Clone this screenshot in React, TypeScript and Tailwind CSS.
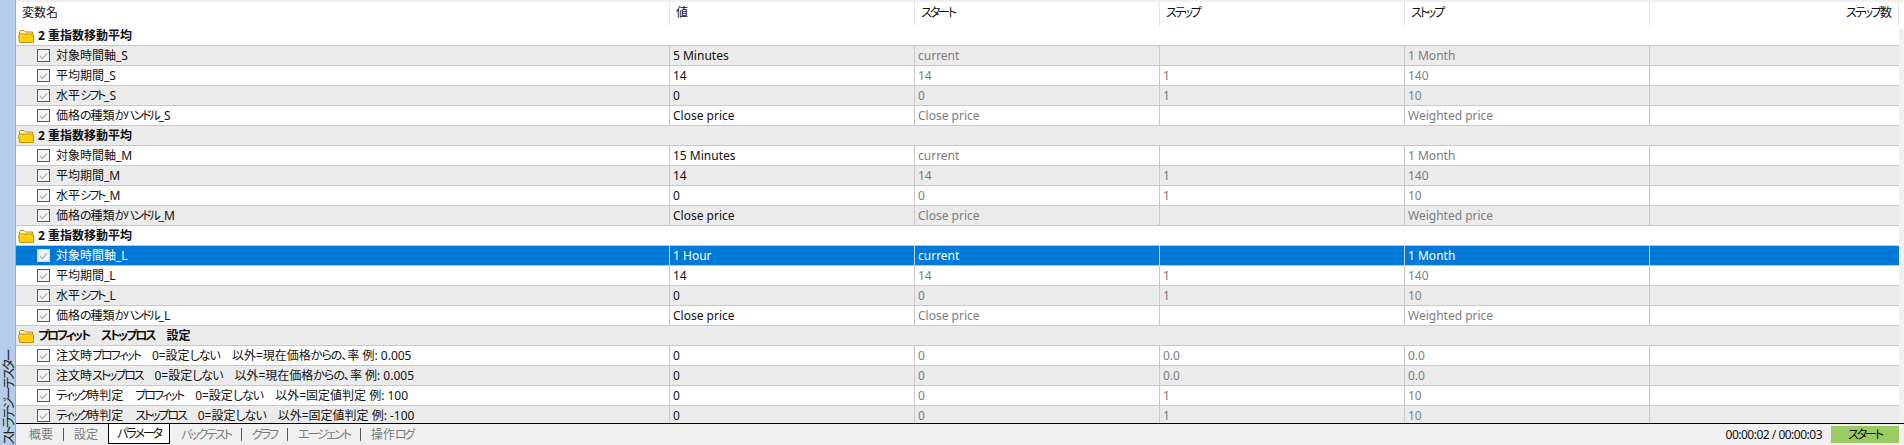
const gridCols = "grid grid-cols-[654px_245px_245px_245px_245px_1fr]";

type Row =
  | { type: "group"; name: string }
  | { type: "param"; name: string; v: string; start: string; step: string; stop: string; selected?: boolean };

const ema = (s: string, tf: string, selected = false): Row[] => [
  { type: "group", name: "2 重指数移動平均" },
  { type: "param", name: `対象時間軸_${s}`, v: tf, start: "current", step: "", stop: "1 Month", selected },
  { type: "param", name: `平均期間_${s}`, v: "14", start: "14", step: "1", stop: "140" },
  { type: "param", name: `水平シフト_${s}`, v: "0", start: "0", step: "1", stop: "10" },
  { type: "param", name: `価格の種類かハンドル_${s}`, v: "Close price", start: "Close price", step: "", stop: "Weighted price" },
];

const rows: Row[] = [
  ...ema("S", "5 Minutes"),
  ...ema("M", "15 Minutes"),
  ...ema("L", "1 Hour", true),
  { type: "group", name: "プロフィット\u3000ストップロス\u3000設定" },
  { type: "param", name: "注文時プロフィット\u30000=設定しない\u3000以外=現在価格からの、率 例: 0.005", v: "0", start: "0", step: "0.0", stop: "0.0" },
  { type: "param", name: "注文時ストップロス\u30000=設定しない\u3000以外=現在価格からの、率 例: 0.005", v: "0", start: "0", step: "0.0", stop: "0.0" },
  { type: "param", name: "ティック時判定\u3000プロフィット\u30000=設定しない\u3000以外=固定値判定 例: 100", v: "0", start: "0", step: "1", stop: "10" },
  { type: "param", name: "ティック時判定\u3000ストップロス\u30000=設定しない\u3000以外=固定値判定 例: -100", v: "0", start: "0", step: "1", stop: "10" },
];

// The reference's UI font sets kana narrower than kanji.
function K({ children }: { children: string }) {
  const parts = children.split(/([\u3040-\u30FF]+)/);
  return (
    <>
      {parts.map((p, i) => {
        if (i % 2 === 0) return <span key={i}>{p}</span>;
        const katakana = /[\u30A0-\u30FF]/.test(p);
        return (
          <span key={i} className={katakana ? "tracking-[-2.1px]" : "tracking-[-1px]"}>
            {p}
          </span>
        );
      })}
    </>
  );
}

function Folder() {
  return (
    <svg width="16" height="14" viewBox="0 0 16 14" className="shrink-0">
      <path d="M1.5 12.5V2.5L2.5 1.5H6L7.5 3H14.5V5" fill="#fff3c4" stroke="#b98a1e" />
      <path d="M0.5 6.5L2 5H14.5L15.5 6V13.5H1.5Z" fill="#ffcf0a" stroke="#c2920f" />
    </svg>
  );
}

function Check({ selected }: { selected?: boolean }) {
  return (
    <span
      className={`flex h-[13px] w-[13px] shrink-0 items-center justify-center border ${
        selected ? "border-[#c6dcf2] bg-[#eef3f8]" : "border-[#1a6aa8] bg-[#f4f4f4]"
      }`}
    >
      <svg width="9" height="8" viewBox="0 0 9 8">
        <path d="M1 4L3.5 6.5L8 1.5" fill="none" stroke="#b4b4b4" strokeWidth="1.3" />
      </svg>
    </span>
  );
}

function GridRow({ row, index }: { row: Row; index: number }) {
  const stripe = index % 2 === 1 ? "bg-[#ebebeb]" : "bg-white";
  if (row.type === "group") {
    return (
      <div className={`flex h-5 items-center gap-[4px] border-b border-[#c8c8c8] pl-[2px] font-bold text-[#111] ${stripe}`}>
        <Folder />
        <span className="whitespace-pre">
          <K>{row.name}</K>
        </span>
      </div>
    );
  }
  const sel = row.selected;
  const lines = sel ? "border-[#c4d9ef]" : "border-[#c8c8c8]";
  const cell = `truncate border-r pl-[3px] leading-[19px] ${lines}`;
  const muted = sel ? "text-white" : "text-[#7d7d7d]";
  return (
    <div className={`${gridCols} h-5 border-b border-[#c8c8c8] ${sel ? "bg-[#0078d7] text-white" : `${stripe} text-[#111]`}`}>
      <div className={`flex items-center gap-[6px] border-r pl-[21px] ${lines}`}>
        <Check selected={sel} />
        <span className="whitespace-pre">
          <K>{row.name}</K>
        </span>
      </div>
      <div className={cell}>{row.v}</div>
      <div className={`${cell} ${muted}`}>{row.start}</div>
      <div className={`${cell} ${muted}`}>{row.step}</div>
      <div className={`${cell} ${muted}`}>{row.stop}</div>
      <div />
    </div>
  );
}

const headers = ["変数名", "値", "スタート", "ステップ", "ストップ"];

function Sep() {
  return <span className="mx-[10px] h-[13px] w-px bg-[#555]" />;
}

export default function App() {
  return (
    <div className="flex h-[445px] w-[1904px] overflow-hidden bg-[#f0f0f0] font-['Noto_Sans','Noto_Sans_CJK_JP',sans-serif] text-[12px] [font-feature-settings:'palt'] text-[#111]">
      <aside className="flex w-[16px] shrink-0 items-end justify-center overflow-hidden border-r border-r-[#a6a6a6] bg-[#b5cde8]">
        <span className="rotate-180 whitespace-pre text-[13px] leading-[14px] tracking-[-2.4px] text-[#222] [text-orientation:sideways] [writing-mode:vertical-rl]">
          ストラテジーテスター
        </span>
      </aside>
      <main className="flex min-w-0 flex-1 flex-col">
        <div className="h-[2px] bg-[#f0f0f0]" />
        <div className="flex min-h-0 flex-1">
          <div className="flex min-w-0 flex-1 flex-col">
            <div className={`${gridCols} h-6 shrink-0 bg-white`}>
              {headers.map((h) => (
                <div key={h} className="border-r border-[#e6e6e6] pl-[6px] leading-[22px]">
                  <K>{h}</K>
                </div>
              ))}
              <div className="border-r border-[#e6e6e6] pr-[6px] text-right leading-[22px]">
                <K>ステップ数</K>
              </div>
            </div>
            <div className="min-h-0 flex-1 overflow-hidden">
              {rows.map((r, i) => (
                <GridRow key={i} row={r} index={i} />
              ))}
            </div>
          </div>
          <div className="flex w-[5px] shrink-0 flex-col">
            <div className="h-[26px] bg-white" />
            <div className="flex-1 bg-[#f0f0f0]" />
          </div>
        </div>
        <footer className="flex h-[22px] shrink-0 items-stretch border-t border-black">
          <nav className="flex items-center pl-[13px] text-[#7b7b7b]">
            <span>概要</span>
            <Sep />
            <span>設定</span>
            <span className="ml-[10px] mr-[11px] flex h-[20px] w-[62px] items-center justify-center self-start border-x border-b border-black bg-white text-[#111]">
              <K>パラメータ</K>
            </span>
            <span>
              <K>バックテスト</K>
            </span>
            <Sep />
            <span>
              <K>グラフ</K>
            </span>
            <Sep />
            <span>
              <K>エージェント</K>
            </span>
            <Sep />
            <span>
              <K>操作ログ</K>
            </span>
          </nav>
          <div className="ml-auto flex items-center gap-[9px] pr-[5px]">
            <span className="tracking-[-0.5px] text-[#111]">00:00:02 / 00:00:03</span>
            <button className="flex h-[17px] w-[68px] items-center justify-center bg-[#9bcb63] text-[#111]">
              <K>スタート</K>
            </button>
          </div>
        </footer>
      </main>
    </div>
  );
}
